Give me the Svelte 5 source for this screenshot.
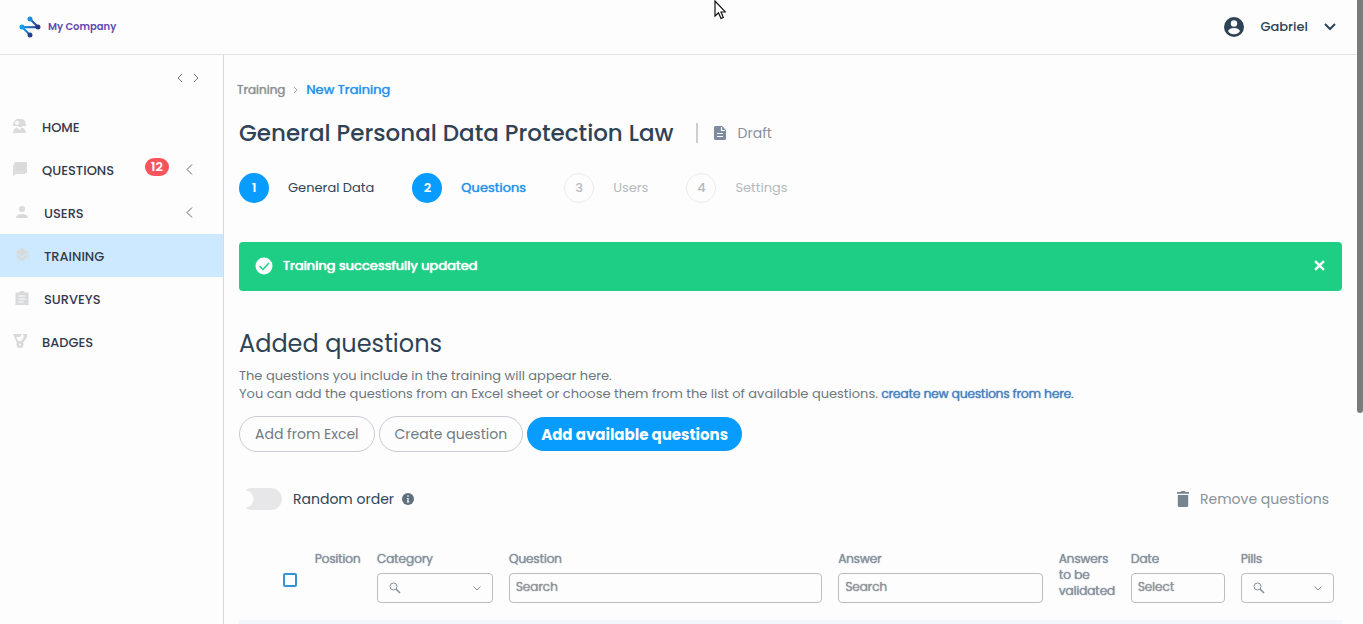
<script>
  const menu = [
    { label: 'HOME', icon: 'home' },
    { label: 'QUESTIONS', icon: 'chat', badge: 12, children: true },
    { label: 'USERS', icon: 'user', children: true, inset: true },
    { label: 'TRAINING', icon: 'cap', active: true, inset: true },
    { label: 'SURVEYS', icon: 'clipboard', inset: true },
    { label: 'BADGES', icon: 'medal' }
  ];

  const steps = [
    { label: 'General Data', state: 'done' },
    { label: 'Questions', state: 'current' },
    { label: 'Users', state: 'pending' },
    { label: 'Settings', state: 'pending' }
  ];

  let showAlert = $state(true);
  let randomOrder = $state(false);
</script>

{#snippet menuIcon(name)}
  <svg class="menu-icon" viewBox="0 0 14 14" aria-hidden="true">
    {#if name === 'home'}
      <path d="M4 0h5q4 1 4 7H9.500q-2 2.500-4.500 0H0q0-4 2-5.500zM0 14q0-4 4-5.500L6.500 11 9 8.500q4 1.500 4 5.500z" />
      <circle cx="4" cy="4" r="2" fill="#fdfdfd" />
    {:else if name === 'chat'}
      <path d="M3 0h10q1 0 1 1v9q0 1-1 1h-1v1H3l-3 2V3h1V2q0-2 2-2z" />
      <path d="M2 3v7h9" fill="none" stroke="#eeeeee" stroke-width="0.6" />
    {:else if name === 'user'}
      <circle cx="7" cy="4" r="3" />
      <path d="M1 13q0-4 6-4t6 4z" />
    {:else if name === 'cap'}
      <path d="M7 0l7 4L7 8 0 4z" />
      <path d="M2 6.500l5 3 5-3V10l-5 3.500L2 10zM13 5h1v6h-1z" />
    {:else if name === 'clipboard'}
      <path d="M0.500 1.500H4.500a2.500 2 0 0 1 5 0h4V14H0.500z" />
      <path d="M3.500 5h7M3.500 8h7M3.500 11h5" stroke="#fdfdfd" />
    {:else}
      <path d="M0 0h9l-2 3H3l3 5-2 1zM10 0h4v3l-4 6-2-2 3-4z" />
      <circle cx="7" cy="10.500" r="3.500" />
      <circle cx="7" cy="10.500" r="1" fill="#fdfdfd" />
    {/if}
  </svg>
{/snippet}

{#snippet filterSelect(id)}
  <div class="filter-select">
    <select {id}><option value=""></option></select>
    <svg class="lens" viewBox="0 0 12 12" aria-hidden="true">
      <circle cx="4.500" cy="4.500" r="3.500" />
      <path d="M7 7l4 4" stroke-width="1.600" />
    </svg>
    <svg class="caret" viewBox="0 0 8 5" aria-hidden="true"><path d="M0.500 0.500L4 4l3.500-3.500" /></svg>
  </div>
{/snippet}

<div class="page">
  <header class="topbar">
    <a class="brand" href="#home">
      <svg viewBox="0 0 22 22" aria-hidden="true">
        <defs>
          <linearGradient id="brand" x1="0" x2="1">
            <stop offset="0" stop-color="#1c9cf0" />
            <stop offset="1" stop-color="#263a8c" />
          </linearGradient>
        </defs>
        <path d="M11 3l8 8v0.300L3 11l8 8" fill="none" stroke="url(#brand)" stroke-width="2" />
        <circle cx="11" cy="3" r="2.500" fill="#168fe0" />
        <circle cx="19" cy="11" r="2.500" fill="#27388a" />
        <circle cx="3" cy="11" r="2.500" fill="#149cf0" />
        <circle cx="11" cy="19" r="2.500" fill="#27408e" />
      </svg>
      <span>My Company</span>
    </a>
    <button class="account">
      <svg class="avatar" viewBox="0 0 20 20" aria-hidden="true">
        <circle cx="10" cy="10" r="10" fill="#2f4356" />
        <circle cx="10" cy="6.500" r="3.200" fill="#fdfdfd" />
        <path d="M4 14q1.500-3 6-3t6 3q-2 3.200-6 3.200T4 14z" fill="#fdfdfd" />
      </svg>
      <span>Gabriel</span>
      <svg class="chevron-down" viewBox="0 0 12 8" aria-hidden="true"><path d="M1 1l5 5 5-5" /></svg>
    </button>
  </header>

  <div class="layout">
    <aside class="sidebar">
      <div class="collapse">
        <button aria-label="Collapse menu"><svg viewBox="0 0 6 10"><path d="M5 1L1 5l4 4" /></svg></button>
        <button aria-label="Expand menu"><svg viewBox="0 0 6 10"><path d="M1 1l4 4-4 4" /></svg></button>
      </div>
      <nav>
        {#each menu as item}
          <a href="#{item.label.toLowerCase()}" class:active={item.active} class:inset={item.inset}>
            {@render menuIcon(item.icon)}
            <span class="menu-label">{item.label}</span>
            {#if item.badge}<span class="count">{item.badge}</span>{/if}
            {#if item.children}
              <svg class="arrow" viewBox="0 0 7 11" aria-hidden="true"><path d="M6 0.500l-5 5 5 5" /></svg>
            {/if}
          </a>
        {/each}
      </nav>
    </aside>

    <main>
      <nav class="breadcrumb strong" aria-label="Breadcrumb">
        <a href="#training">Training</a>
        <svg viewBox="0 0 5 8" aria-hidden="true"><path d="M1 1l3 3-3 3" /></svg>
        <a class="here" href="#new">New Training</a>
      </nav>

      <div class="title">
        <h1>General Personal Data Protection Law</h1>
        <span class="status">
          <svg viewBox="0 0 12 14" aria-hidden="true">
            <path d="M1.500 0H8l4 4v8.500q0 1.500-1.500 1.500h-9Q0 14 0 12.500v-11Q0 0 1.500 0z" fill="#7d8ba0" />
            <path d="M7.500 1v3.500H11M3 7.500h6M3 10.500h6" fill="none" stroke="#fdfdfd" stroke-width="1.200" />
          </svg>
          Draft
        </span>
      </div>

      <ol class="steps">
        {#each steps as step, i}
          <li class={step.state}>
            <span class="number">{i + 1}</span>
            <span class:strong={step.state === 'current'}>{step.label}</span>
          </li>
        {/each}
      </ol>

      {#if showAlert}
        <div class="alert" role="status">
          <svg viewBox="0 0 18 18" aria-hidden="true">
            <circle cx="9" cy="9" r="8.500" fill="#fff" />
            <path d="M4.500 9l3.500 3.500 6-6.500" fill="none" stroke="#1fce85" stroke-width="1.500" />
          </svg>
          <span class="strong">Training successfully updated</span>
          <button aria-label="Close" onclick={() => (showAlert = false)}>
            <svg viewBox="0 0 10 10"><path d="M1 1l8 8M9 1L1 9" stroke="#fff" stroke-width="2.200" /></svg>
          </button>
        </div>
      {/if}

      <h2>Added questions</h2>
      <p>
        The questions you include in the training will appear here.<br />
        You can add the questions from an Excel sheet or choose them from the list of available questions.
        <a class="strong light" href="#create">create new questions from here.</a>
      </p>

      <div class="actions">
        <button>Add from Excel</button>
        <button>Create question</button>
        <button class="primary">Add available questions</button>
      </div>

      <div class="toolbar">
        <label class="switch">
          <input type="checkbox" bind:checked={randomOrder} />
          <span>Random order</span>
          <svg viewBox="0 0 12 12" aria-hidden="true">
            <circle cx="6" cy="6" r="6" fill="#5f707c" />
            <path d="M6 2.200v1.600M5 5.500h1V9M4.800 9h2.400" fill="none" stroke="#fdfdfd" stroke-width="1.200" />
          </svg>
        </label>
        <button class="remove">
          <svg viewBox="0 0 12 16" aria-hidden="true">
            <path d="M0 1h3.500l1-1h3l1 1H12v1.800H0zM0.800 4h10.400v10.500q0 1.500-1.500 1.500H2.300Q0.800 16 0.800 14.500z" fill="#74858f" />
          </svg>
          Remove questions
        </button>
      </div>

      <table>
        <thead>
          <tr class="strong light">
            <th class="col-check"><input type="checkbox" aria-label="Select all" /></th>
            <th class="col-position">Position</th>
            <th class="col-category"><label for="category">Category</label>{@render filterSelect('category')}</th>
            <th><label for="question">Question</label><input id="question" type="text" placeholder="Search" /></th>
            <th class="col-answer"><label for="answer">Answer</label><input id="answer" type="text" placeholder="Search" /></th>
            <th class="col-validated">Answers to be validated</th>
            <th class="col-date"><label for="date">Date</label><input id="date" type="text" placeholder="Select" /></th>
            <th class="col-pills"><label for="pills">Pills</label>{@render filterSelect('pills')}</th>
          </tr>
        </thead>
        <tbody>
          <tr><td colspan="8"></td></tr>
        </tbody>
      </table>
    </main>
  </div>

  <div class="scroll-thumb"></div>
  <svg class="pointer" viewBox="0 0 12 20" aria-hidden="true">
    <path d="M1 1v15l3.500-3.300L7 18.500l2.300-1L7 12h4.500z" fill="#fff" stroke="#111" stroke-width="1.200" />
  </svg>
</div>

<style>
  :global(body) {
    overflow: hidden;
    background: #fdfdfd;
  }

  .page {
    height: 100vh;
    display: flex;
    flex-direction: column;
    overflow: hidden;
    font-family: Poppins, Inter, sans-serif;
    font-size: 13px;
    color: #2f4356;
  }

  button,
  input,
  select {
    font: inherit;
    color: inherit;
  }

  button {
    padding: 0;
    border: 0;
    background: none;
    cursor: pointer;
  }

  a {
    color: inherit;
    text-decoration: none;
  }

  svg {
    flex: none;
    display: block;
  }

  /* lighter weights, thickened */
  .strong {
    font-weight: 400;
    text-shadow: 0 0 1px currentColor;
  }

  .strong.light {
    font-weight: 300;
    text-shadow: 0 0 1px currentColor, 0 0 1px currentColor;
  }

  .topbar {
    flex: none;
    box-sizing: border-box;
    height: 55px;
    padding: 0 27px 0 19px;
    display: flex;
    align-items: center;
    justify-content: space-between;
    border-bottom: 1px solid #e4e4e8;
  }

  .brand {
    display: flex;
    align-items: center;
    gap: 7px;
    font-size: 10px;
    font-weight: 600;
    color: #5f4bb0;
  }

  .brand svg {
    width: 22px;
    height: 22px;
  }

  .account {
    display: flex;
    align-items: center;
    gap: 16px;
    font-weight: 500;
  }

  .avatar {
    width: 20px;
    height: 20px;
  }

  .chevron-down {
    width: 12px;
    height: 8px;
    fill: none;
    stroke: #2f4356;
    stroke-width: 2;
  }

  .layout {
    flex: 1;
    min-height: 0;
    display: flex;
  }

  .sidebar {
    flex: none;
    width: 223px;
    border-right: 1px solid #d9d9dc;
  }

  .collapse {
    height: 50px;
    box-sizing: border-box;
    padding: 18px 24px 0 0;
    display: flex;
    justify-content: flex-end;
    align-items: flex-start;
    gap: 10px;
  }

  .collapse svg {
    width: 6px;
    height: 10px;
    fill: none;
    stroke: #777;
  }

  .sidebar nav a {
    box-sizing: border-box;
    height: 43px;
    padding: 2px 30px 0 13px;
    display: flex;
    align-items: center;
    font-weight: 500;
    color: #343a4c;
  }

  .sidebar nav a.inset {
    padding-left: 15px;
  }

  .sidebar nav a.active {
    background: #cce9ff;
  }

  .menu-icon {
    width: 14px;
    height: 14px;
    margin: 0 15px 4px 0;
    fill: #d8dadb;
  }

  .menu-label {
    flex: 1;
  }

  .count {
    padding: 0 6px;
    margin: 0 17px 8px 0;
    border-radius: 9px;
    background: #f8545c;
    color: #fff;
    font-size: 13px;
    font-weight: 600;
    line-height: 18px;
  }

  .arrow {
    width: 7px;
    height: 11px;
    margin-bottom: 2px;
    fill: none;
    stroke: #666;
  }

  main {
    flex: 1;
    min-width: 0;
    padding: 24px 21px 0 15px;
  }

  .breadcrumb {
    height: 22px;
    display: flex;
    align-items: center;
    gap: 8px;
    margin: 0 0 16px -2px;
    font-size: 12px;
    color: #8b9193;
  }

  .breadcrumb svg {
    width: 5px;
    height: 8px;
    fill: none;
    stroke: #a5a5a8;
  }

  .breadcrumb .here {
    font-size: 13px;
    color: #2790ea;
  }

  .title {
    height: 32px;
    display: flex;
    align-items: center;
    gap: 22px;
  }

  h1 {
    margin: 0;
    font-size: 23px;
    font-weight: 500;
    line-height: 32px;
  }

  .status {
    display: flex;
    align-items: center;
    gap: 12px;
    height: 20px;
    padding-left: 16px;
    border-left: 2px solid #ccced2;
    font-size: 14px;
    color: #87919f;
  }

  .status svg {
    width: 12px;
    height: 14px;
  }

  .steps {
    display: flex;
    gap: 38px;
    margin: 24px 0 39px;
    padding: 0;
    list-style: none;
  }

  .steps li {
    display: flex;
    align-items: center;
    gap: 19px;
  }

  .number {
    box-sizing: border-box;
    width: 30px;
    height: 30px;
    border-radius: 50%;
    line-height: 30px;
    text-align: center;
    font-weight: 600;
    color: #fff;
    background: #089cff;
  }

  .steps .current {
    color: #2790ea;
  }

  .steps .pending {
    color: #b4babd;
  }

  .pending .number {
    border: 1px solid #ececef;
    line-height: 28px;
    font-weight: 500;
    color: #b4babd;
    background: none;
  }

  .alert {
    display: flex;
    align-items: center;
    gap: 10px;
    height: 49px;
    box-sizing: border-box;
    padding: 0 17px 2px 16px;
    border-radius: 4px;
    background: #1fce85;
    color: #fff;
  }

  .alert span {
    flex: 1;
    text-shadow: 0 0 1px currentColor, 0 0 1px currentColor;
  }

  .alert > svg {
    width: 18px;
    height: 18px;
  }

  .alert button svg {
    width: 11px;
    height: 11px;
  }

  h2 {
    margin: 35px 0 5px;
    font-size: 24px;
    font-weight: 400;
    line-height: 36px;
  }

  p {
    margin: 0 0 13px;
    line-height: 18px;
    color: #6c777d;
  }

  p a {
    font-size: 12px;
    color: #457fbd;
  }

  .actions {
    display: flex;
    align-items: center;
    gap: 4px;
    margin-bottom: 36px;
  }

  .actions button {
    height: 36px;
    padding: 0 15px;
    border: 1px solid #c9cbd2;
    border-radius: 18px;
    font-size: 14px;
    color: #6f7b81;
  }

  .actions .primary {
    height: 34px;
    padding: 0 14px;
    border: 0;
    background: #089cff;
    color: #fff;
    font-size: 15px;
    font-weight: 700;
  }

  .toolbar {
    display: flex;
    align-items: center;
    justify-content: space-between;
    height: 22px;
    padding-right: 13px;
    margin-bottom: 33px;
    font-size: 14px;
  }

  .switch {
    display: flex;
    align-items: center;
  }

  .switch input {
    appearance: none;
    width: 41px;
    height: 22px;
    margin: 0 11px 0 2px;
    border-radius: 11px;
    background: radial-gradient(circle at 4px 11px, #fdfdfd 8px, #e7e7ea 9px);
  }

  .switch input:checked {
    background: radial-gradient(circle at 30px 11px, #fdfdfd 8px, #089cff 9px);
  }

  .switch svg {
    width: 12px;
    height: 12px;
    margin-left: 8px;
  }

  .remove {
    display: flex;
    align-items: center;
    gap: 11px;
    color: #87939a;
  }

  .remove svg {
    width: 12px;
    height: 16px;
  }

  table {
    width: 100%;
    table-layout: fixed;
    border-collapse: collapse;
  }

  th {
    height: 61px;
    padding: 8px;
    vertical-align: top;
    text-align: left;
    font-size: 12px;
    font-weight: inherit;
    line-height: 16px;
    color: #858f9c;
  }

  th label {
    display: block;
    margin-bottom: 6px;
  }

  td {
    height: 40px;
    padding: 0;
    background: #f1f7fc;
  }

  .col-check { width: 52px; }
  .col-position { width: 46px; }
  .col-category { width: 116px; }
  .col-answer { width: 20%; box-sizing: border-box; }
  .col-validated { width: 56px; }
  .col-date { width: 94px; }
  .col-pills { width: 93px; }

  th input[type='text'],
  select {
    display: block;
    box-sizing: border-box;
    width: 100%;
    height: 30px;
    padding: 0 6px 2px;
    border: 1px solid #bcbdc1;
    border-radius: 4px;
    background: #fdfdfd;
    font-size: 12px;
    text-shadow: inherit;
  }

  select {
    appearance: none;
    padding-left: 30px;
  }

  ::placeholder {
    color: #8f9498;
    opacity: 1;
  }

  .col-check input {
    appearance: none;
    display: block;
    width: 14px;
    height: 14px;
    margin: 22px 2px 0 auto;
    border: 2px solid #3593d8;
    border-radius: 2px;
  }

  .filter-select {
    position: relative;
  }

  .lens,
  .caret {
    position: absolute;
    fill: none;
    stroke: #858f9c;
    pointer-events: none;
  }

  .lens {
    top: 9px;
    left: 12px;
    width: 12px;
    height: 12px;
  }

  .caret {
    top: 13px;
    right: 12px;
    width: 8px;
    height: 5px;
  }

  .scroll-thumb {
    position: fixed;
    top: 0;
    right: 0;
    width: 6px;
    height: 66.2vh;
    border-radius: 0 0 3px 3px;
    background: #7b7b7b;
  }

  .pointer {
    position: fixed;
    top: 0;
    left: 52.4%;
    width: 12px;
    height: 20px;
  }
</style>
